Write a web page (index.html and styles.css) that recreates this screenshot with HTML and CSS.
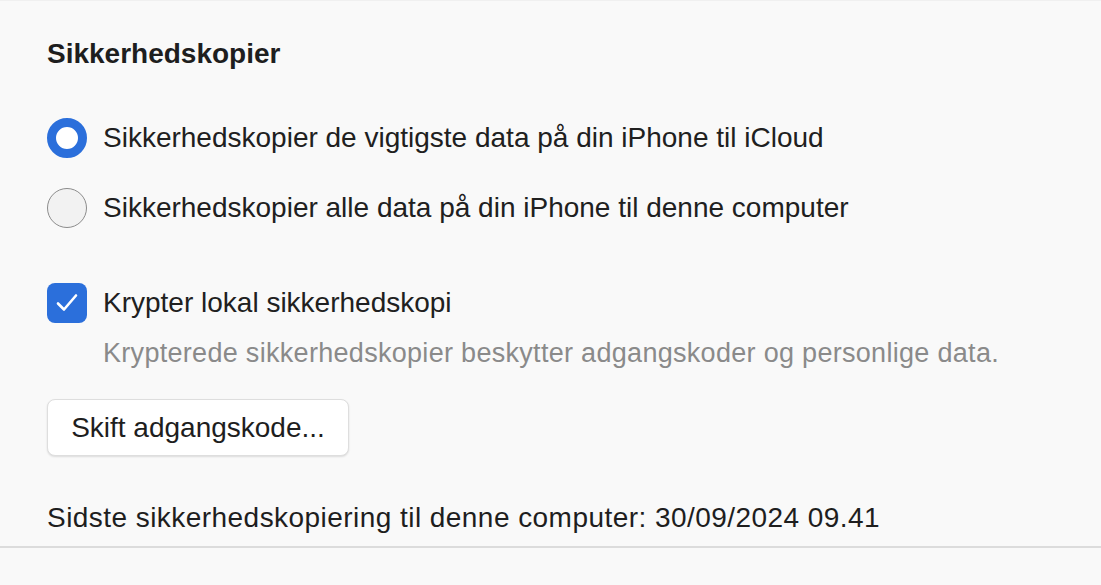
FILE: index.html
```html
<!DOCTYPE html>
<html lang="da">
<head>
<meta charset="utf-8">
<link rel="stylesheet" href="styles.css">
</head>
<body>
<div class="panel">
  <section class="section">
    <h2 class="title">Sikkerhedskopier</h2>
    <div class="radios">
      <div class="row">
        <span class="radio radio-on"></span>
        <span class="label">Sikkerhedskopier de vigtigste data på din iPhone til iCloud</span>
      </div>
      <div class="row">
        <span class="radio"></span>
        <span class="label">Sikkerhedskopier alle data på din iPhone til denne computer</span>
      </div>
    </div>
    <div class="row check-row">
      <span class="checkbox">
        <svg width="40" height="40" viewBox="0 0 40 40"><path d="M11 20.5 L17 26.5 L29 12.5" fill="none" stroke="#fff" stroke-width="2.6" stroke-linecap="round" stroke-linejoin="round"/></svg>
      </span>
      <span class="label">Krypter lokal sikkerhedskopi</span>
    </div>
    <p class="desc">Krypterede sikkerhedskopier beskytter adgangskoder og personlige data.</p>
    <button class="btn">Skift adgangskode...</button>
    <p class="last">Sidste sikkerhedskopiering til denne computer: 30/09/2024 09.41</p>
  </section>
</div>
</body>
</html>
```
FILE: styles.css
```css
html, body {
  margin: 0;
  padding: 0;
  background: #f9f9f9;
}
body {
  font-family: "Liberation Sans", Arial, sans-serif;
  color: #202020;
  width: 1101px;
  height: 585px;
  overflow: hidden;
}
.panel {
  border-top: 1px solid #f0f0f0;
}
.section {
  padding: 0 0 0 47px;
  border-bottom: 2px solid #dcdcdc;
  height: 547px;
  box-sizing: border-box;
}
.title {
  margin: 0;
  padding-top: 38px;
  font-size: 28px;
  font-weight: bold;
  line-height: 30px;
  color: #1e1e1e;
}
.radios {
  margin-top: 49px;
  display: flex;
  flex-direction: column;
  gap: 30px;
}
.row {
  display: flex;
  align-items: center;
  gap: 16px;
  height: 40px;
}
.label {
  font-size: 28px;
  line-height: 30px;
}
.radio {
  width: 40px;
  height: 40px;
  border-radius: 50%;
  box-sizing: border-box;
  border: 1.5px solid #8c8c8c;
  background: #f2f2f2;
  flex: none;
}
.radio-on {
  border: 9px solid #2b6fdb;
  background: #fff;
}
.check-row {
  margin-top: 55px;
}
.checkbox {
  width: 40px;
  height: 40px;
  border-radius: 8px;
  background: #2b6fdb;
  display: flex;
  flex: none;
}
.desc {
  margin: 15px 0 0 56px;
  font-size: 27px;
  letter-spacing: 0.3px;
  line-height: 30px;
  color: #8a8a8a;
}
.btn {
  margin-top: 31px;
  width: 302px;
  height: 57px;
  background: #fff;
  border: 1px solid #dedede;
  border-radius: 8px;
  box-shadow: 0 1px 2px rgba(0,0,0,0.12);
  font-family: inherit;
  font-size: 28px;
  color: #1e1e1e;
  padding: 0;
}
.last {
  margin: 47px 0 0;
  font-size: 28px;
  letter-spacing: 0.45px;
  line-height: 30px;
  color: #1e1e1e;
}
```
